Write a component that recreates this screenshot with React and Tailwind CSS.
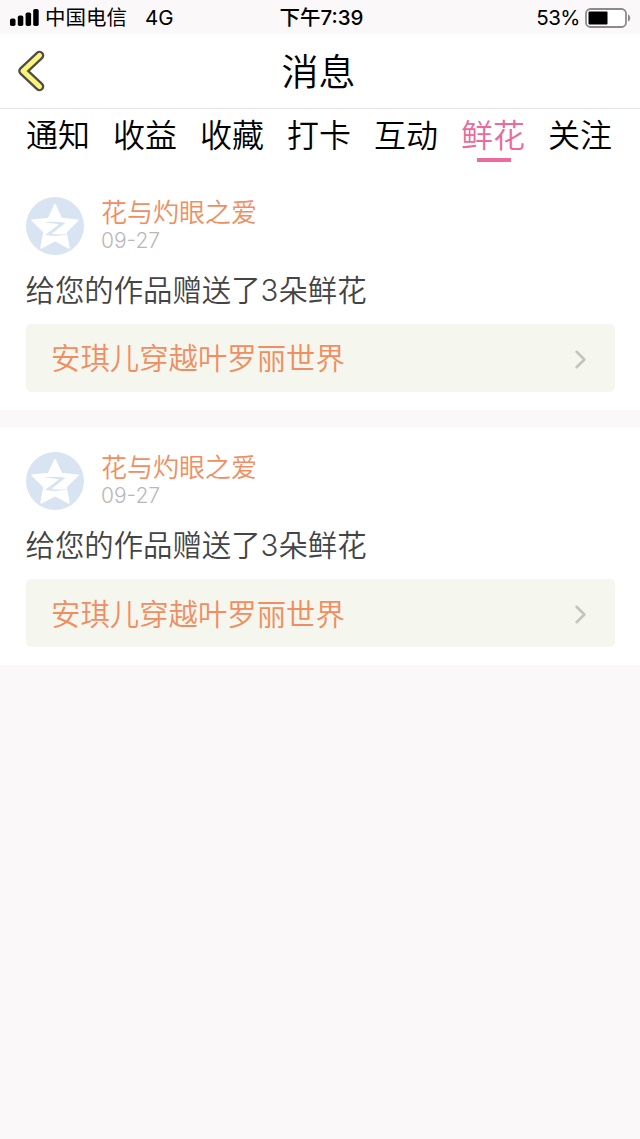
import { ChevronRight } from 'lucide-react';

const tabs = ['通知', '收益', '收藏', '打卡', '互动', '鲜花', '关注'];

const messages = [
  { id: 1, name: '花与灼眼之爱', date: '09-27', text: '给您的作品赠送了3朵鲜花', work: '安琪儿穿越叶罗丽世界' },
  { id: 2, name: '花与灼眼之爱', date: '09-27', text: '给您的作品赠送了3朵鲜花', work: '安琪儿穿越叶罗丽世界' },
];

const StatusBar = () => (
  <div className="grid h-[34px] grid-cols-3 items-center bg-[#faf8f9] pt-[2px] pl-[10px] pr-[9px] text-[20.5px] leading-[32px] text-black">
    <div className="flex items-center whitespace-nowrap">
      <svg className="mr-[6px] shrink-0" width="29" height="18" viewBox="0 0 29 18">
        <rect x="0" y="9.500" width="5.5" height="7.5" rx="1.8" />
        <rect x="7.8" y="6.500" width="5.5" height="10.5" rx="1.8" />
        <rect x="15.6" y="3.500" width="5.5" height="13.5" rx="1.8" />
        <rect x="23.2" y="0" width="5.5" height="17" rx="1.8" />
      </svg>
      <span>中国电信</span>
      <span className="ml-[18px]">4G</span>
    </div>
    <div className="pl-[2px] text-center font-medium whitespace-nowrap">下午7:39</div>
    <div className="flex items-center justify-end">
      <span className="mr-[5px] tracking-[-0.5px]">53%</span>
      <svg width="46" height="20" viewBox="0 0 46 20">
        <rect x="1" y="1" width="40" height="18" rx="4.5" fill="#fff" stroke="#8c8a8c" strokeWidth="1.8" />
        <rect x="3.5" y="3.5" width="19" height="13" rx="1" />
        <path d="M43 6.5c3 1 3 6 0 7z" fill="#8c8a8c" />
      </svg>
    </div>
  </div>
);

const Header = () => (
  <div className="grid h-[75px] grid-cols-3 items-center border-b border-[#e2e2e2] bg-white px-[18px]">
    <button className="w-fit">
      <svg width="27" height="42" viewBox="0 0 27 42" fill="none" strokeLinecap="round" strokeLinejoin="round">
        <path d="M21.500 5.500L5 21l16.500 15.500" stroke="#4f4e45" strokeWidth="9.6" />
        <path d="M21.500 5.500L5 21l16.500 15.500" stroke="#fbf57c" strokeWidth="5" />
      </svg>
    </button>
    <h1 className="pt-[3px] pr-[3px] text-center text-[37px] leading-[48px] font-[350] text-black">消息</h1>
  </div>
);

const Tabs = () => (
  <div className="flex h-[62.5px] gap-[23px] bg-white pt-[2px] pl-[26px]">
    {tabs.map((tab) => (
      <button
        key={tab}
        className={`flex w-16 shrink-0 flex-col items-center text-[32px] leading-[50px] font-[350] ${tab === '鲜花' ? 'text-[#ec6a9c]' : 'text-black'}`}
      >
        <span className="whitespace-nowrap">{tab}</span>
        {tab === '鲜花' && <span className="-mt-[3px] ml-[2px] h-1 w-[34px] bg-[#ec6a9c]" />}
      </button>
    ))}
  </div>
);

const Avatar = () => (
  <svg width="58" height="58" viewBox="0 0 58 58" className="shrink-0">
    <circle cx="29" cy="29" r="29" fill="#d8e4f2" />
    <path
      d="M29 7.500l6.500 14 16.500 1.800-12 11.700 3 16L29 43.500 15 51l3-16L6 23.300l16.500-1.800z"
      fill="#fff"
      stroke="#fff"
      strokeWidth="1.5"
      strokeLinejoin="round"
    />
    <path d="M18.500 25.500c7-1 14-1 21 .3L25.500 37c6 .8 12 .6 18.500-.2-8 2.200-17 2.700-25 1.300L33 27.200c-5-.8-9-1-14.500-1.700z" fill="#d8e4f2" />
  </svg>
);

const MessageCard = ({ message }) => (
  <div className="h-[238px] bg-white px-[25.5px] pt-[25px]">
    <div className="flex gap-[17.5px]">
      <Avatar />
      <div className="pt-px">
        <div className="text-[26px] leading-[30px] font-[350] text-[#f08e62]">{message.name}</div>
        <div className="text-[21px] leading-[26px] font-light text-[#b8b8b8]">{message.date}</div>
      </div>
    </div>
    <p className="mt-[16px] text-[29.4px] leading-[40px] font-[350] text-[#444]">{message.text}</p>
    <button className="mt-[13px] flex h-[68px] w-full items-center justify-between rounded-[5px] bg-[#f5f6ed] pt-[3px] pr-[19px] pl-[25.5px]">
      <span className="text-[29.4px] leading-[40px] font-[350] text-[#f08e62]">{message.work}</span>
      <ChevronRight className="h-[31px] w-[31px] text-[#c4c5bd]" strokeWidth={2} />
    </button>
  </div>
);

const App = () => {
  return (
    <div className="min-h-screen bg-[#faf8f9] font-['Inter','Noto_Sans_CJK_SC',sans-serif]">
      <StatusBar />
      <Header />
      <Tabs />
      <div className="flex flex-col gap-[17.5px]">
        {messages.map((message) => (
          <MessageCard key={message.id} message={message} />
        ))}
      </div>
    </div>
  );
};

export default App;
